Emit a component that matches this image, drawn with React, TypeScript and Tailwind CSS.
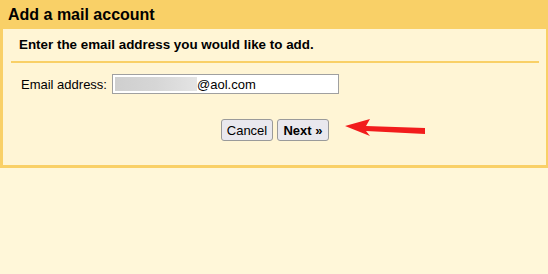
export default function App() {
  return (
    <div className="w-[548px] h-[274px] bg-[#fff7d9] font-['Liberation_Sans',Arial,sans-serif] text-black overflow-hidden">
      {/* Title bar */}
      <div className="h-[29px] bg-[#f9d067] pl-[8px] flex items-center">
        <span className="text-[16px] font-bold leading-none pt-[1px]">Add a mail account</span>
      </div>

      {/* Dialog body */}
      <div className="relative h-[139px] bg-[#fff5d5] border-l-[3px] border-r-[2px] border-b-[3px] border-[#f9d067]">
        <div className="pl-[16px] pt-[8px] h-[31px] text-[13.4px] font-bold leading-[15px]">
          Enter the email address you would like to add.
        </div>
        <div className="ml-[8px] mr-[7px] mt-[1px] h-[2px] bg-[#f9d067]" />

        <div className="flex items-center mt-[11px] h-[20px]">
          <label className="ml-[18px] w-[91px] text-[13px] leading-none">Email address:</label>
          <div className="w-[227px] h-[20px] bg-white border border-[#a0a0a0] flex items-center px-[2px]">
            <div className="w-[82px] h-[14px] bg-gradient-to-r from-[#cfcfcf] via-[#d6d6d6] to-[#e4e4e4]" />
            <span className="text-[13px] leading-none">@aol.com</span>
          </div>
        </div>

        <div className="flex justify-center gap-[4px] mt-[25px] pl-[1px]">
          <button className="w-[52px] h-[22px] rounded-[3px] border border-[#9a9a9a] bg-[#e9e8ee] text-[13px] leading-none">
            Cancel
          </button>
          <button className="w-[52px] h-[22px] rounded-[3px] border border-[#9a9a9a] bg-[#e9e8ee] text-[13px] font-bold leading-none">
            Next »
          </button>
        </div>

        {/* annotation arrow */}
        <svg className="absolute left-[339px] top-[89px]" width="86" height="20" viewBox="0 0 86 20">
          <path d="M3 8 L28 1 L24 8 L83 10 L83 16 L24 13 L28 18 Z" fill="#f21c1c" />
        </svg>
      </div>
    </div>
  );
}
